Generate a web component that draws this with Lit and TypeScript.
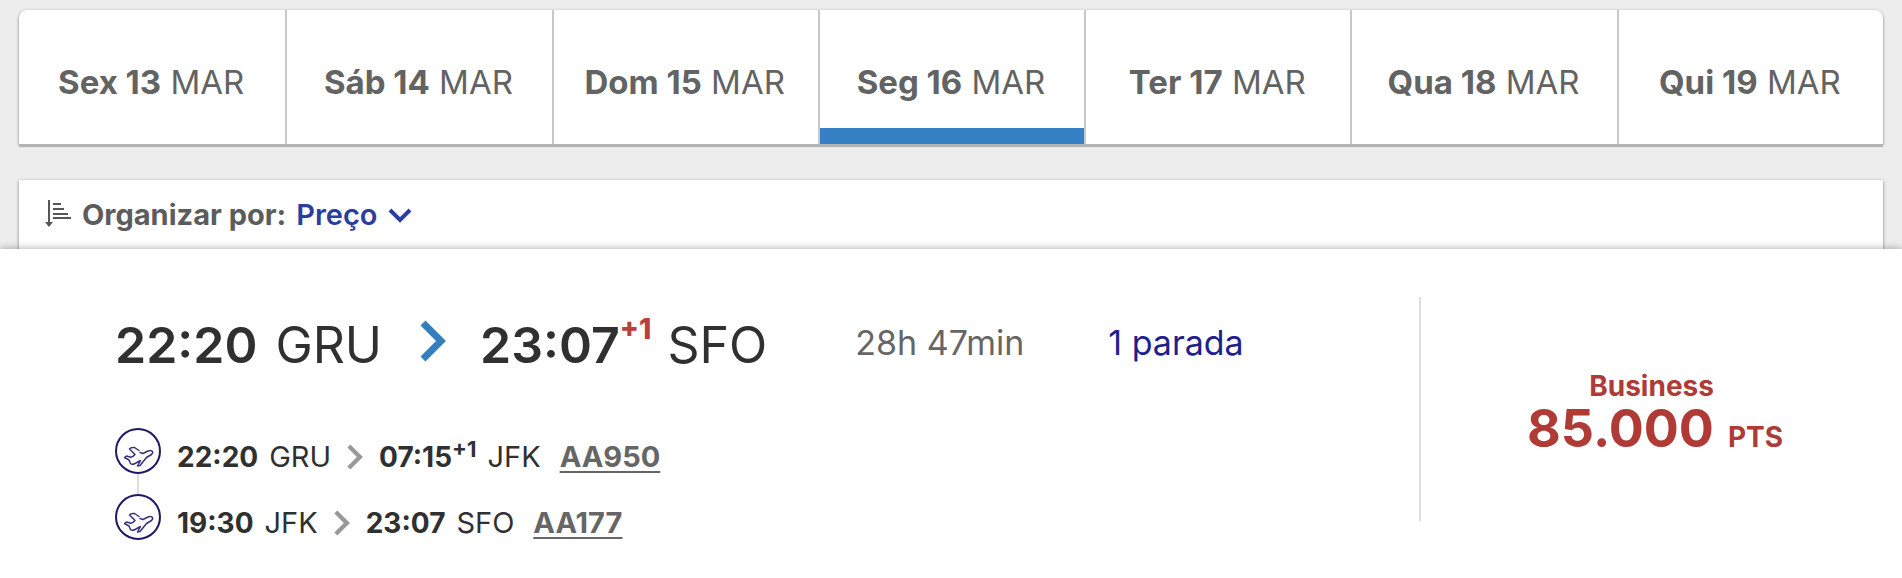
import { LitElement, html, css, svg } from "lit";
import { customElement, state } from "lit/decorators.js";
import { classMap } from "lit/directives/class-map.js";

interface Day { name: string; month: string; }
interface Leg { from: string; dep: string; to: string; arr: string; plus?: string; code: string; }

const DAYS: Day[] = ["Sex 13", "Sáb 14", "Dom 15", "Seg 16", "Ter 17", "Qua 18", "Qui 19"]
  .map((name) => ({ name, month: "MAR" }));

const LEGS: Leg[] = [
  { from: "GRU", dep: "22:20", to: "JFK", arr: "07:15", plus: "+1", code: "AA950" },
  { from: "JFK", dep: "19:30", to: "SFO", arr: "23:07", code: "AA177" },
];

@customElement("date-tabs")
class DateTabs extends LitElement {
  @state() private active = 3;

  static styles = css`
    :host { display: block; }
    .tabs {
      display: grid;
      grid-template-columns: repeat(7, 1fr);
      background: #fff;
      border-radius: 8px 8px 0 0;
      box-shadow: 0 3px 0 #b4b4b4, 0 1px 3px #777;
      overflow: hidden;
    }
    .tab {
      font: 400 33px/40px Inter, sans-serif;
      color: #636363;
      background: none;
      border: 0;
      border-left: 2px solid #c8c8c8;
      padding: 52px 2px 42px 0;
      margin: 0;
      white-space: nowrap;
      cursor: pointer;
    }
    .tab:first-child { border-left: 0; }
    .active { box-shadow: inset 0 -16px #357fc4; }
    b { font-weight: 700; }
  `;

  render() {
    return html`<div class="tabs" role="tablist">
      ${DAYS.map((d, i) => html`<button role="tab" aria-selected=${i === this.active}
        class=${classMap({ tab: true, active: i === this.active })}
        @click=${() => (this.active = i)}><b>${d.name}</b> ${d.month}</button>`)}
    </div>`;
  }
}

@customElement("flight-result")
class FlightResult extends LitElement {
  static styles = css`
    :host {
      display: block;
      color: #303030;
      background: #fff;
      box-shadow: 0 0 8px rgba(0, 0, 0, 0.35);
      position: relative;
    }
    .card {
      display: grid;
      grid-template-columns: minmax(0, 1fr) 483px;
      padding: 48px 0 32px 115px;
    }
    .info { padding-top: 18px; }
    .summary { display: flex; align-items: baseline; font-size: 50px; line-height: 60px; }
    .summary b { font-weight: 600; }
    .summary .port { margin-left: 18px; }
    .big-arrow { width: 26px; height: 42px; margin: 5px 34px 0 38px; align-self: flex-start; }
    .day { color: #b9403c; font-size: 28px; font-weight: 800; line-height: 28px; align-self: flex-start; }
    .summary .day + .port { margin-left: 16px; }
    .duration, .stops { font-size: 34px; line-height: 56px; align-self: flex-start; }
    .duration { color: #666; margin-left: 88px; }
    .stops { color: #1f1f8f; margin-left: 84px; text-decoration: none; }
    .legs { list-style: none; margin: 53px 0 0; padding: 0; display: grid; gap: 20px; }
    .leg { display: flex; align-items: center; font-size: 29px; line-height: 46px; height: 46px; }
    .leg b { font-size: 28px; font-weight: 700; }
    .leg .text { display: flex; align-items: baseline; padding: 12px 0 0 16px; }
    .leg .port { margin-left: 11px; }
    .plus { font-size: 22px; font-weight: 700; line-height: 30px; align-self: flex-start; }
    .small-arrow { width: 16px; height: 26px; margin: 0 16px; align-self: center; }
    .code { color: #666; font-weight: 700; margin-left: 19px; text-decoration-thickness: 2px; text-underline-offset: 4px; }
    .badge { width: 46px; height: 46px; overflow: visible; flex: none; }
    .price {
      border-left: 2px solid #ddd;
      color: #b03a36;
      font-weight: 700;
      display: grid;
      grid-template-columns: auto auto;
      column-gap: 14px;
      justify-content: start;
      align-self: start;
      align-items: baseline;
      padding: 72px 0 66px 106px;
    }
    .cabin { font-size: 28px; line-height: 34px; text-align: right; }
    .points { font-size: 52px; line-height: 52px; grid-column: 1; }
    .unit { font-size: 28px; line-height: 34px; }
  `;

  private arrow(cls: string, color: string, w: number) {
    return html`<svg class=${cls} viewBox="0 0 26 42" aria-hidden="true">
      ${svg`<path d="M3 3 L21 21 L3 39" fill="none" stroke=${color} stroke-width=${w}/>`}
    </svg>`;
  }

  private badge(last: boolean) {
    return html`<svg class="badge" viewBox="0 0 46 46" aria-hidden="true">
      ${last ? null : svg`<path d="M23 46V66" stroke="#ddd" stroke-width="2"/>`}
      <circle cx="23" cy="23" r="22" fill="#fff" stroke="#1d1a63" stroke-width="2"/>
      <path fill="none" stroke="#34327a" stroke-width="1.5" stroke-linejoin="round" stroke-linecap="round"
        d="M24 22.5 L19.5 19.5 Q16 19 14.5 21 L20 26.5 Q17 30 15 29 L11.500 28 L9.500 29.500 L14 32 L15.500 35.500 Q17 37 20 35.500 L25.500 32.500 L22.500 38 L25 37.500 L31.500 29.500 L36.500 26.500 Q38.500 24.500 37 23 Q35.500 22 33 23 L28 25.500 L25 24.500"/>
    </svg>`;
  }

  render() {
    return html`<article class="card">
      <div class="info">
        <div class="summary">
          <b>22:20</b><span class="port">GRU</span>
          ${this.arrow("big-arrow", "#357fbd", 7)}
          <b>23:07</b><span class="day">+1</span><span class="port">SFO</span>
          <span class="duration">28h 47min</span>
          <a class="stops" href="#">1 parada</a>
        </div>
        <ul class="legs">
          ${LEGS.map((l, i) => html`<li class="leg">
            ${this.badge(i === LEGS.length - 1)}
            <div class="text">
              <b>${l.dep}</b><span class="port">${l.from}</span>
              ${this.arrow("small-arrow", "#999", 7)}
              <b>${l.arr}</b>${l.plus ? html`<span class="plus">${l.plus}</span>` : null}<span class="port">${l.to}</span>
              <a class="code" href="#">${l.code}</a>
            </div>
          </li>`)}
        </ul>
      </div>
      <div class="price">
        <span class="cabin">Business</span>
        <span class="points">85.000</span><span class="unit">PTS</span>
      </div>
    </article>`;
  }
}

@customElement("app-root")
class AppRoot extends LitElement {
  static styles = css`
    :host {
      display: flex;
      flex-direction: column;
      min-height: 100vh;
      box-sizing: border-box;
      background: #ededed;
      font-family: Inter, sans-serif;
      overflow: hidden;
    }
    date-tabs { margin: 10px 19px 0; }
    .sort {
      display: flex;
      align-items: center;
      margin: 36px 19px 0;
      padding: 13px 25px 12px;
      background: #fff;
      box-shadow: 0 1px 3px #777;
      font-size: 29px;
      line-height: 44px;
      color: #5c5c5c;
    }
    .sort-icon { width: 28px; height: 30px; margin: 0 10px 4px 0; }
    label { font-weight: 700; margin-right: 10px; }
    .picker { display: flex; align-items: center; gap: 10px; }
    select {
      appearance: none;
      field-sizing: content;
      border: 0;
      padding: 0;
      margin: 0;
      background: none;
      font: 600 29px/44px Inter, sans-serif;
      color: #2b3da0;
    }
    .chevron { width: 24px; height: 16px; }
    flight-result { flex: 1; }
  `;

  render() {
    return html`
      <date-tabs></date-tabs>
      <div class="sort">
        <svg class="sort-icon" viewBox="0 0 28 30" fill="none" stroke="#555" stroke-width="2" aria-hidden="true">
          <path d="M5 2V25M9 6H17M9 11H20M9 16H24M9 20H27"/>
          <path d="M1 24H9L5 29Z" fill="#555" stroke="none"/>
        </svg>
        <label for="order">Organizar por:</label>
        <span class="picker">
          <select id="order"><option>Preço</option></select>
          <svg class="chevron" viewBox="0 0 24 16" fill="none" stroke="#2b3da0" stroke-width="4" aria-hidden="true">
            <path d="M2 3L12 13L22 3"/>
          </svg>
        </span>
      </div>
      <flight-result></flight-result>`;
  }
}
